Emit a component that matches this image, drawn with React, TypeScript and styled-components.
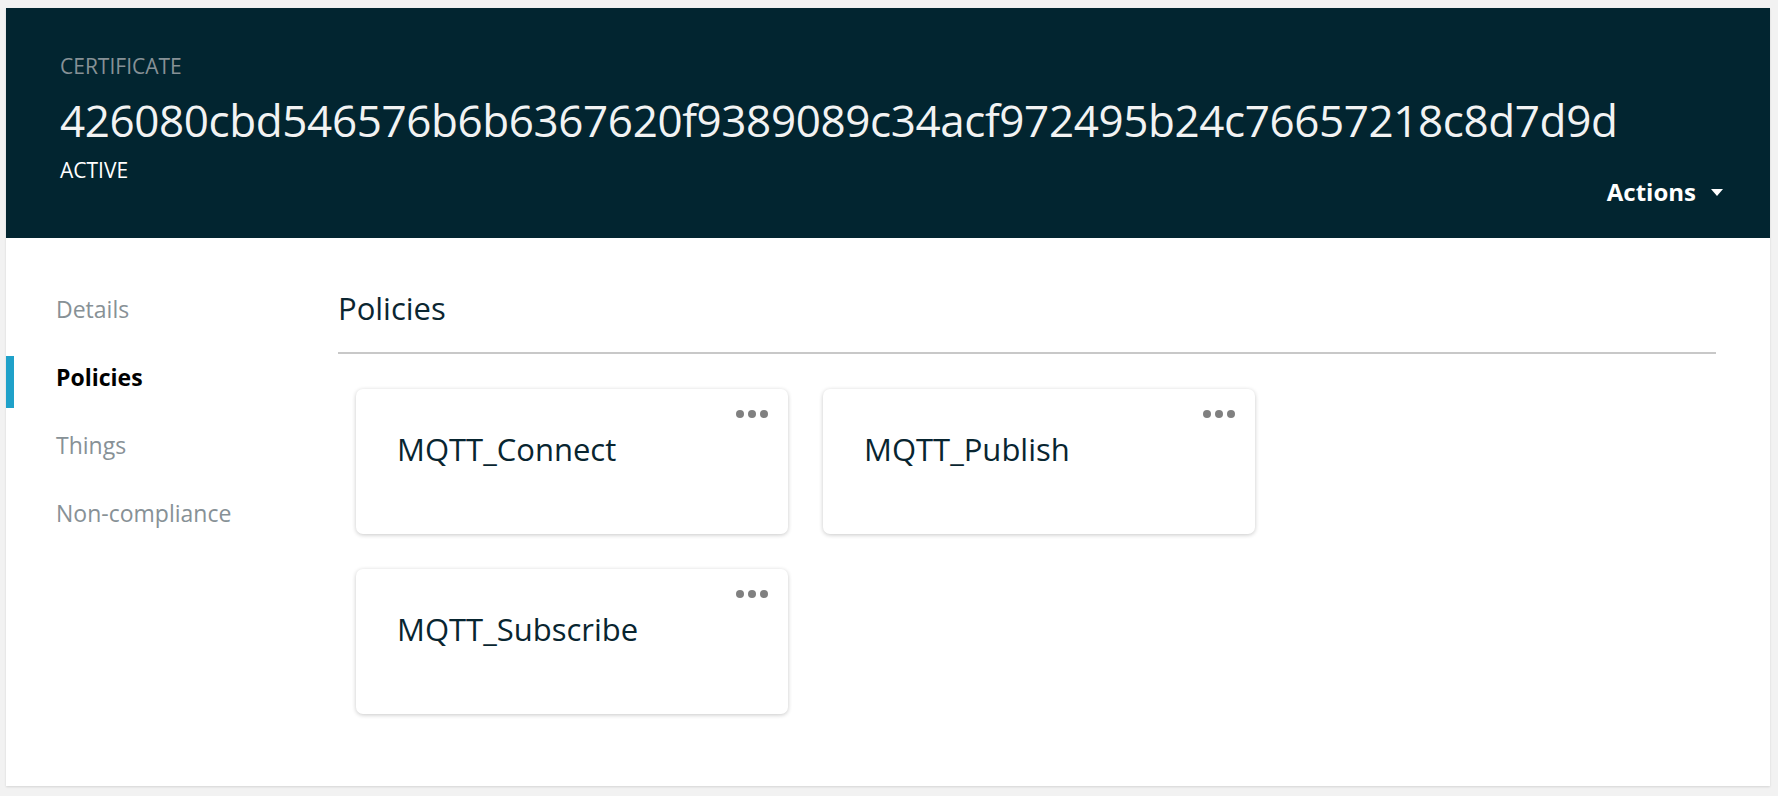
import React from "react";
import styled, { createGlobalStyle } from "styled-components";

const GlobalStyle = createGlobalStyle`
  html, body {
    margin: 0;
    padding: 0;
    background: #f2f2f2;
  }
  body {
    font-family: "Open Sans", "Noto Sans", "Liberation Sans", sans-serif;
  }
  * { box-sizing: border-box; }
`;

const Page = styled.div`
  padding: 8px 8px 10px 6px;
  min-height: 796px;
`;

const Panel = styled.div`
  background: #ffffff;
  box-shadow: 0 1px 2px rgba(0, 0, 0, 0.12);
  display: flex;
  flex-direction: column;
`;

const Header = styled.header`
  background: #022530;
  height: 230px;
  display: flex;
  justify-content: space-between;
  padding: 46px 47px 32px 54px;
`;

const TitleBlock = styled.div`
  flex: 1;
  min-width: 0;
  display: flex;
  flex-direction: column;
`;

const Eyebrow = styled.div`
  font-size: 21px;
  line-height: 24px;
  color: #879196;
`;

const CertId = styled.h1`
  margin: 16px 0 0;
  font-size: 44px;
  line-height: 52px;
  font-weight: 400;
  color: #f2f3f3;
  letter-spacing: -0.39px;
  white-space: nowrap;
`;

const Status = styled.div`
  margin-top: 12px;
  font-size: 21px;
  line-height: 24px;
  color: #ffffff;
`;

const ActionsButton = styled.button`
  flex-shrink: 0;
  align-self: flex-end;
  display: flex;
  align-items: center;
  gap: 15px;
  background: none;
  border: none;
  padding: 0;
  cursor: pointer;
  font-family: inherit;
  font-size: 24px;
  line-height: 28px;
  font-weight: 700;
  color: #ffffff;
`;

const Body = styled.div`
  display: flex;
  padding: 50px 54px 72px 0;
`;

const Sidebar = styled.nav`
  width: 332px;
  flex-shrink: 0;
  display: flex;
  flex-direction: column;
  gap: 16px;
`;

const NavItem = styled.a<{ $active?: boolean }>`
  display: block;
  height: 52px;
  padding: 7px 0 0 50px;
  font-size: 23px;
  line-height: 28px;
  font-weight: ${(p) => (p.$active ? 700 : 400)};
  color: ${(p) => (p.$active ? "#000000" : "#879196")};
  box-shadow: ${(p) => (p.$active ? "inset 8px 0 0 #1fa1c9" : "none")};
  text-decoration: none;
  cursor: pointer;
`;

const Content = styled.main`
  flex: 1;
  display: flex;
  flex-direction: column;
`;

const Heading = styled.h2`
  margin: 0;
  padding-bottom: 24px;
  border-bottom: 2px solid #c8c8c8;
  font-size: 31px;
  line-height: 40px;
  font-weight: 400;
  color: #0b2631;
`;

const CardGrid = styled.div`
  display: grid;
  grid-template-columns: repeat(2, 432px);
  grid-auto-rows: 145px;
  gap: 35px;
  margin-top: 35px;
  padding-left: 18px;
`;

const Card = styled.div`
  position: relative;
  background: #ffffff;
  border-radius: 7px;
  box-shadow: 0 1px 4px rgba(0, 0, 0, 0.22);
  padding: 42px 40px 0 41px;
`;

const CardTitle = styled.div`
  font-size: 31px;
  line-height: 36px;
  color: #082530;
`;

const MoreButton = styled.button`
  position: absolute;
  top: 21px;
  right: 20px;
  display: flex;
  gap: 4px;
  padding: 0;
  background: none;
  border: none;
  cursor: pointer;
`;

const Dot = styled.span`
  width: 8px;
  height: 8px;
  border-radius: 50%;
  background: #808080;
`;

const Caret = () => (
  <svg width="12" height="7" viewBox="0 0 12 7" aria-hidden="true">
    <path d="M0 0 L12 0 L6 7 Z" fill="#ffffff" />
  </svg>
);

const policies = ["MQTT_Connect", "MQTT_Publish", "MQTT_Subscribe"];
const navItems = ["Details", "Policies", "Things", "Non-compliance"];

export default function App() {
  return (
    <>
      <GlobalStyle />
      <Page>
        <Panel>
          <Header>
            <TitleBlock>
              <Eyebrow>CERTIFICATE</Eyebrow>
              <CertId>426080cbd546576b6b6367620f9389089c34acf972495b24c76657218c8d7d9d</CertId>
              <Status>ACTIVE</Status>
            </TitleBlock>
            <ActionsButton>
              Actions
              <Caret />
            </ActionsButton>
          </Header>
          <Body>
            <Sidebar>
              {navItems.map((n) => (
                <NavItem key={n} $active={n === "Policies"}>
                  {n}
                </NavItem>
              ))}
            </Sidebar>
            <Content>
              <Heading>Policies</Heading>
              <CardGrid>
                {policies.map((p) => (
                  <Card key={p}>
                    <CardTitle>{p}</CardTitle>
                    <MoreButton aria-label="More">
                      <Dot />
                      <Dot />
                      <Dot />
                    </MoreButton>
                  </Card>
                ))}
              </CardGrid>
            </Content>
          </Body>
        </Panel>
      </Page>
    </>
  );
}
